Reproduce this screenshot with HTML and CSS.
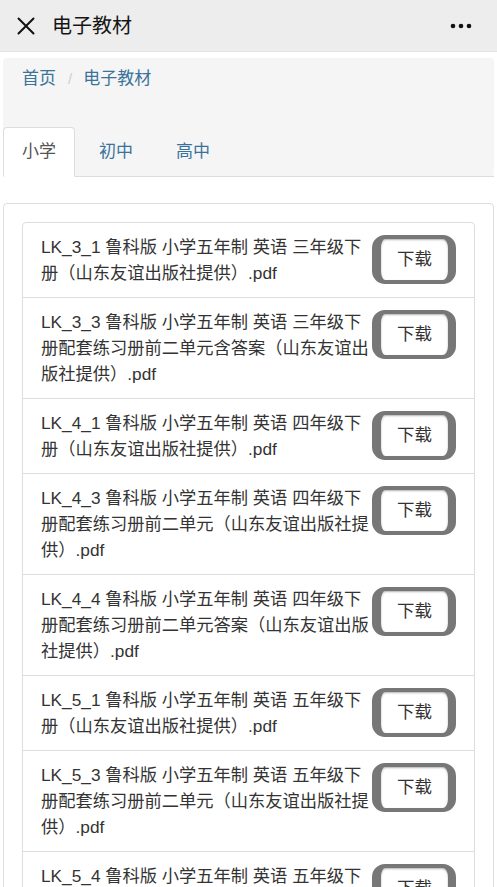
FILE: index.html
```html
<!DOCTYPE html>
<html lang="zh-CN">
<head>
<meta charset="utf-8">
<title>电子教材</title>
<link rel="stylesheet" href="styles.css">
</head>
<body>
<header class="topbar">
  <svg class="close-icon" width="18" height="18" viewBox="0 0 18 18" aria-hidden="true">
    <path d="M1.5 1.5 L16.5 16.5 M16.5 1.5 L1.5 16.5" stroke="#111" stroke-width="2" stroke-linecap="round" fill="none"/>
  </svg>
  <h1 class="title">电子教材</h1>
  <svg class="more-icon" width="22" height="6" viewBox="0 0 22 6" aria-hidden="true">
    <circle cx="3" cy="3" r="2.3" fill="#111"/>
    <circle cx="11" cy="3" r="2.3" fill="#111"/>
    <circle cx="19" cy="3" r="2.3" fill="#111"/>
  </svg>
</header>

<div class="nav-box">
  <ol class="breadcrumb">
    <li><a href="#">首页</a></li>
    <li class="sep">/</li>
    <li><a href="#">电子教材</a></li>
  </ol>
  <ul class="tabs">
    <li class="tab active">小学</li>
    <li class="tab">初中</li>
    <li class="tab">高中</li>
  </ul>
</div>

<section class="panel">
  <ul class="list">
    <li class="item"><span class="name">LK_3_1 鲁科版 小学五年制 英语 三年级下册（山东友谊出版社提供）.pdf</span><button class="dl">下载</button></li>
    <li class="item"><span class="name">LK_3_3 鲁科版 小学五年制 英语 三年级下册配套练习册前二单元含答案（山东友谊出版社提供）.pdf</span><button class="dl">下载</button></li>
    <li class="item"><span class="name">LK_4_1 鲁科版 小学五年制 英语 四年级下册（山东友谊出版社提供）.pdf</span><button class="dl">下载</button></li>
    <li class="item"><span class="name">LK_4_3 鲁科版 小学五年制 英语 四年级下册配套练习册前二单元（山东友谊出版社提供）.pdf</span><button class="dl">下载</button></li>
    <li class="item"><span class="name">LK_4_4 鲁科版 小学五年制 英语 四年级下册配套练习册前二单元答案（山东友谊出版社提供）.pdf</span><button class="dl">下载</button></li>
    <li class="item"><span class="name">LK_5_1 鲁科版 小学五年制 英语 五年级下册（山东友谊出版社提供）.pdf</span><button class="dl">下载</button></li>
    <li class="item"><span class="name">LK_5_3 鲁科版 小学五年制 英语 五年级下册配套练习册前二单元（山东友谊出版社提供）.pdf</span><button class="dl">下载</button></li>
    <li class="item"><span class="name">LK_5_4 鲁科版 小学五年制 英语 五年级下册配套练习册前二单元答案（山东友谊出版社提供）.pdf</span><button class="dl">下载</button></li>
  </ul>
</section>
</body>
</html>
```

FILE: styles.css
```css
* { box-sizing: border-box; }

html, body {
  margin: 0;
  padding: 0;
  background: #fff;
  font-family: "Liberation Sans", "Noto Sans CJK SC", sans-serif;
  color: #333;
}

.topbar {
  height: 52px;
  background: #ededed;
  border-bottom: 1px solid #e2e2e2;
  display: flex;
  align-items: center;
  padding: 0 25px 0 17px;
}

.close-icon { flex-shrink: 0; }

.title {
  margin: 0 0 0 17px;
  font-size: 20px;
  font-weight: normal;
  color: #151515;
  flex: 1;
  line-height: 1;
}

.more-icon { flex-shrink: 0; }

.nav-box {
  margin: 6px 3px 0;
  background: #f5f5f5;
  border-radius: 4px;
}

.breadcrumb {
  list-style: none;
  margin: 0;
  padding: 9px 19px;
  display: flex;
  font-size: 17px;
  line-height: 24px;
}

.breadcrumb a {
  color: #3a7399;
  text-decoration: none;
}

.breadcrumb .sep {
  color: #cfcfcf;
  padding: 0 11px 0 12px;
  font-size: 15px;
}

.tabs {
  list-style: none;
  margin: 27px 0 0;
  padding: 0;
  display: flex;
  border-bottom: 1px solid #dddddd;
}

.tab {
  font-size: 17px;
  line-height: 48px;
  padding: 0 18px;
  border: 1px solid transparent;
  border-radius: 4px 4px 0 0;
  margin-right: 5px;
  margin-bottom: -1px;
  color: #3a7399;
}

.tab.active {
  background: #fff;
  border-color: #dddddd #dddddd transparent;
  color: #555;
}

.panel {
  margin: 26px 3px 0;
  border: 1px solid #dddddd;
  border-radius: 4px;
  padding: 18px 18px 20px;
  background: #fff;
}

.list {
  list-style: none;
  margin: 0;
  padding: 0;
}

.item {
  display: flex;
  align-items: flex-start;
  border: 1px solid #dddddd;
  margin-bottom: -1px;
  padding: 11px 18px;
  background: #fff;
}

.item:first-child { border-radius: 4px 4px 0 0; }

.name {
  flex: 1;
  min-width: 0;
  font-size: 17.25px;
  line-height: 26px;
  color: #333;
}

.dl {
  flex-shrink: 0;
  width: 84px;
  height: 49px;
  margin-top: 1px;
  border-style: solid;
  border-color: #777;
  border-width: 4px 8px 4px 9px;
  border-radius: 13px;
  background: #fff;
  box-shadow: inset 0 1px 2px rgba(0, 0, 0, 0.3);
  font-family: "Liberation Sans", "Noto Sans CJK SC", sans-serif;
  font-size: 17.5px;
  color: #333;
  padding: 0;
  line-height: 1;
}
```
